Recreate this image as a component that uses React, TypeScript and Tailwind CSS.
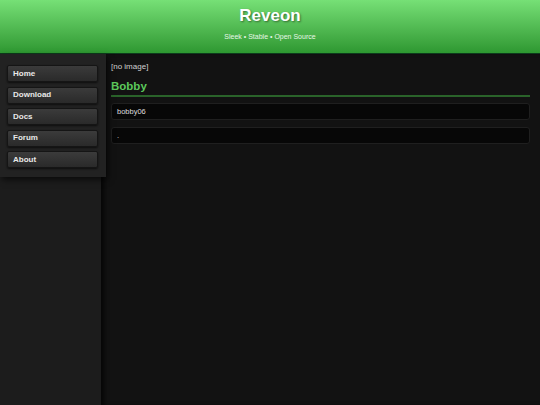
import React from "react";

const navItems = ["Home", "Download", "Docs", "Forum", "About"];

const fields = ["bobby06", "."];

export default function App() {
  return (
    <div className="flex h-[405px] w-[540px] flex-col overflow-hidden bg-[#121212] font-['Liberation_Sans',Arial,sans-serif]">
      {/* Header */}
      <header className="flex h-[54px] shrink-0 flex-col items-center border-b border-[#0d3b1c] bg-gradient-to-b from-[#76e076] to-[#2e9831]">
        <h1 className="mt-[6px] text-[17px] font-bold leading-[20px] text-white [text-shadow:1px_1px_2px_rgba(0,0,0,0.45)]">
          Reveon
        </h1>
        <p className="mt-[6px] text-[7px] leading-[9px] text-[#e6f7e6]">
          Sleek • Stable • Open Source
        </p>
      </header>

      <div className="flex flex-1">
        {/* Sidebar */}
        <aside className="w-[101px] shrink-0 bg-[#1c1c1c]">
          <nav className="relative z-10 flex w-[106px] flex-col gap-[4.6px] bg-[#222222] pb-[9px] pl-[7px] pt-[11px] shadow-[2px_3px_6px_rgba(0,0,0,0.6)]">
            {navItems.map((item) => (
              <a
                key={item}
                href="#"
                className="flex h-[17px] w-[91px] items-center rounded-[2px] border border-[#151515] bg-gradient-to-b from-[#3b3b3b] to-[#2a2a2a] pl-[5px] text-[8px] font-bold text-[#e8e8e8] shadow-[0_1px_2px_rgba(0,0,0,0.6)]"
              >
                {item}
              </a>
            ))}
          </nav>
        </aside>

        {/* Main content */}
        <main className="flex-1 bg-[#121212] px-[10px] pt-[8px] shadow-[inset_5px_0_5px_-2px_rgba(0,0,0,0.7)]">
          <div className="text-[8px] leading-[10px] text-[#d0d0d0]">[no image]</div>
          <h2 className="mt-[7px] border-b-2 border-[#2a632a] pb-[2px] text-[11.5px] font-bold leading-[14px] text-[#5cc95c]">
            Bobby
          </h2>
          <div className="mt-[6px] flex flex-col gap-[7px]">
            {fields.map((f, i) => (
              <div
                key={i}
                className="flex h-[17px] items-center rounded-[3px] border border-[#1f1f1f] bg-[#070707] pl-[5px] text-[7.5px] text-[#dddddd]"
              >
                {f}
              </div>
            ))}
          </div>
        </main>
      </div>
    </div>
  );
}
